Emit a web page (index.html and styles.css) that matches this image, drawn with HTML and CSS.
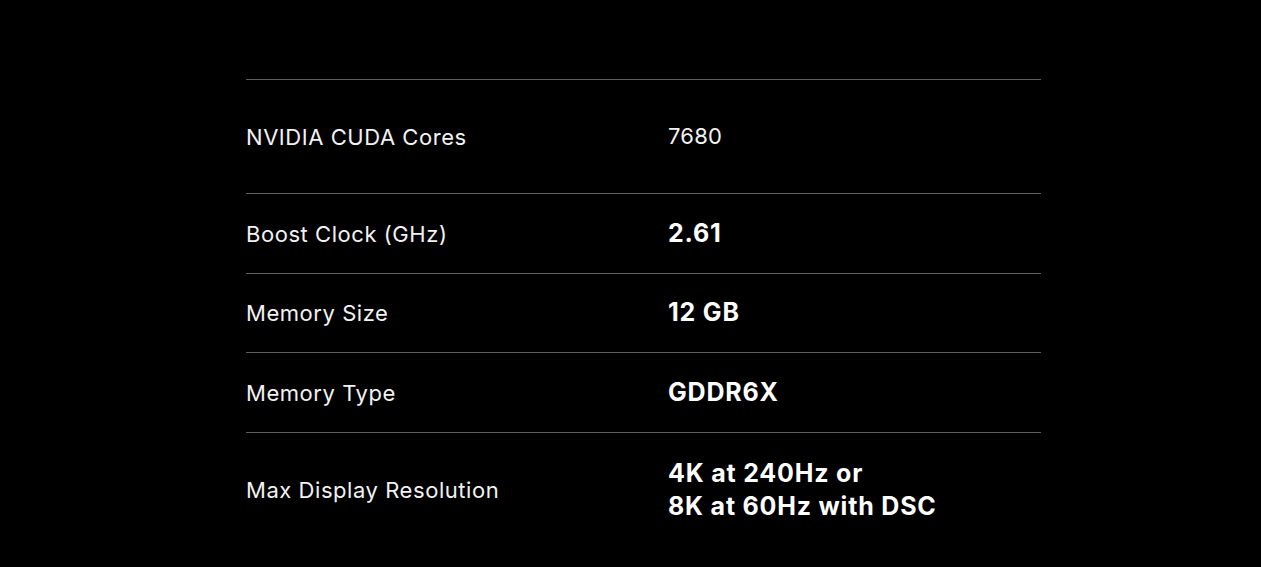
FILE: index.html
```html
<!DOCTYPE html>
<html>
<head>
<meta charset="utf-8">
<link rel="stylesheet" href="styles.css">
</head>
<body>
<div class="page">
  <div class="specs">
    <div class="row row-tall">
      <div class="label">NVIDIA CUDA Cores</div>
      <div class="value value-light">7680</div>
    </div>
    <div class="row">
      <div class="label">Boost Clock (GHz)</div>
      <div class="value">2.61</div>
    </div>
    <div class="row">
      <div class="label">Memory Size</div>
      <div class="value">12 GB</div>
    </div>
    <div class="row">
      <div class="label">Memory Type</div>
      <div class="value">GDDR6X</div>
    </div>
    <div class="row row-last">
      <div class="label">Max Display Resolution</div>
      <div class="value">4K at 240Hz or<br>8K at 60Hz with DSC</div>
    </div>
  </div>
</div>
</body>
</html>
```
FILE: styles.css
```css
html, body {
  margin: 0;
  padding: 0;
  background: #000;
  height: 100%;
  overflow: hidden;
}
body {
  font-family: Inter, "Liberation Sans", sans-serif;
  color: #fff;
}
.page {
  padding: 79px 0 0 246px;
}
.specs {
  width: 795px;
}
.row {
  display: grid;
  grid-template-columns: 422px 1fr;
  align-items: center;
  border-top: 1px solid #5f5f5f;
  height: 78.67px;
}
.row-tall {
  height: 113px;
}
.row-last {
  height: auto;
  padding: 24px 0;
}
.label {
  font-size: 22px;
  font-weight: 400;
  letter-spacing: 0.55px;
  color: #f2f2f2;
  padding-top: 1px;
}
.value {
  font-size: 25px;
  font-weight: 700;
  letter-spacing: 0.8px;
  line-height: 33px;
}
.value-light {
  font-size: 22px;
  font-weight: 400;
  letter-spacing: 0.2px;
  color: #f2f2f2;
}
```
